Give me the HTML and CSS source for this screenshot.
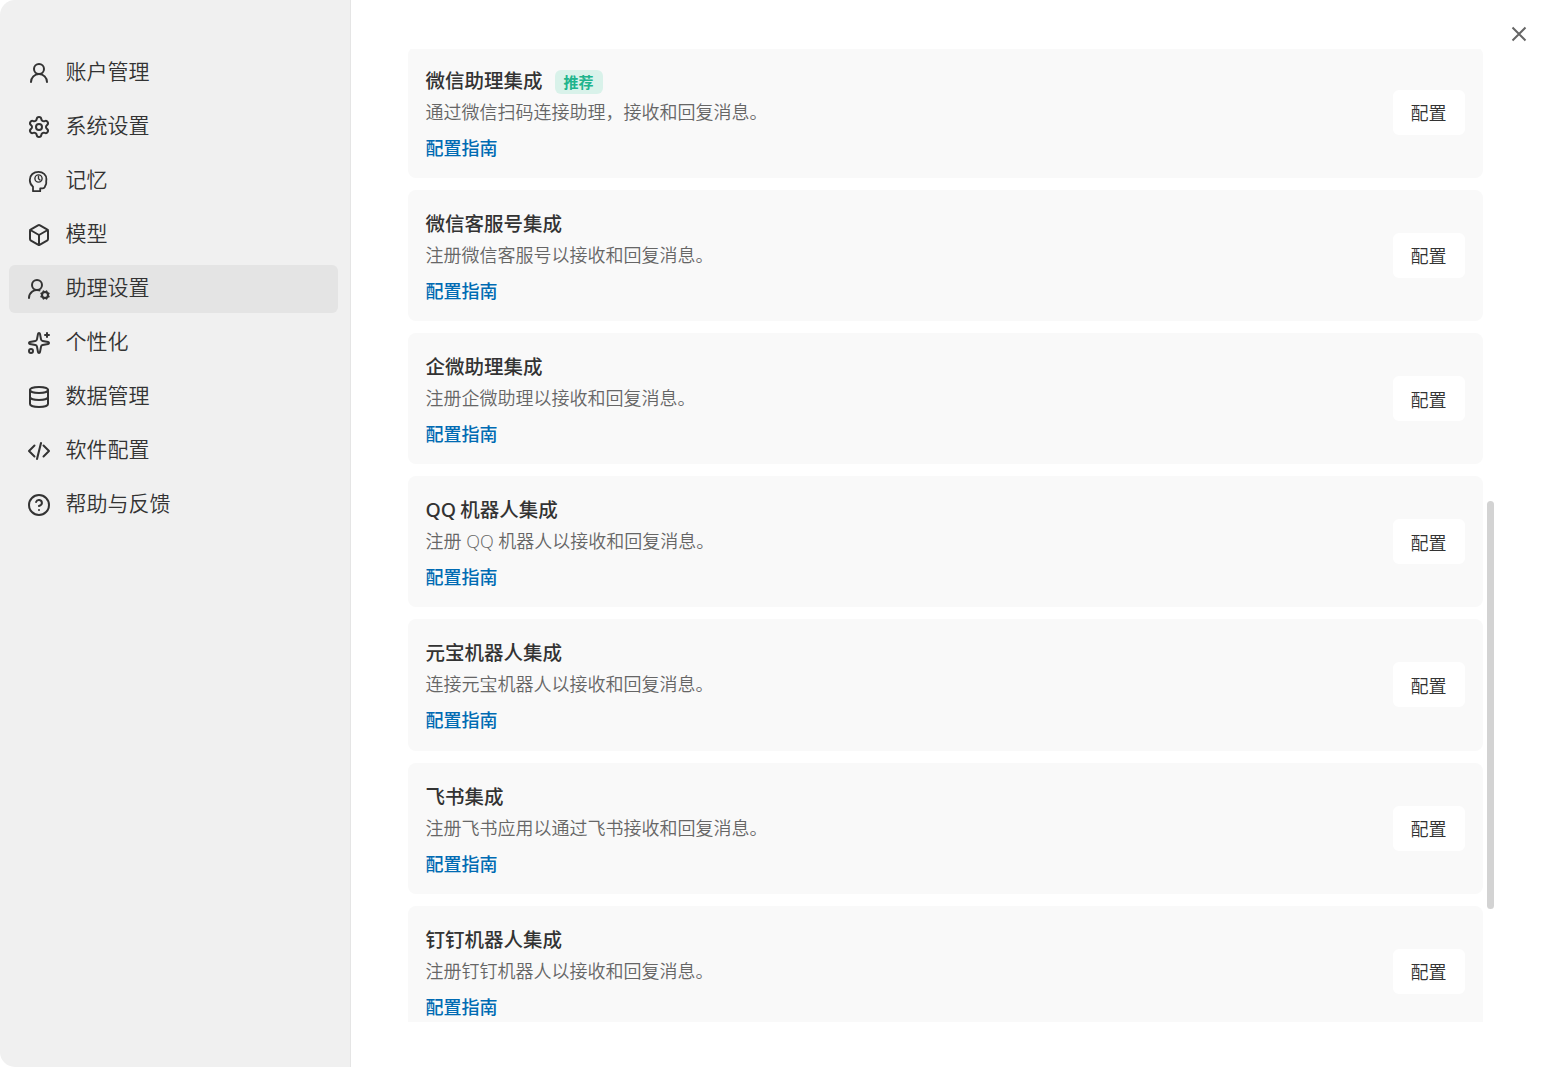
FILE: index.html
```
<!DOCTYPE html>
<html lang="zh-CN">

<head>
<meta charset="utf-8">
<title>助理设置</title>
<link rel="stylesheet" href="styles.css">
</head>

<body>

<div class="window">
    <nav class="sidebar">
        <a class="item">
            <svg class="icon" viewBox="0 0 24 24"><circle cx="12" cy="8" r="5"/><path d="M20 21a8 8 0 0 0-16 0"/></svg>
            <span>账户管理</span>
        </a>
        <a class="item">
            <svg class="icon" viewBox="0 0 24 24"><path d="M9.671 4.136a2.34 2.34 0 0 1 4.659 0 2.34 2.34 0 0 0 3.319 1.915 2.34 2.34 0 0 1 2.33 4.033 2.34 2.34 0 0 0 0 3.831 2.34 2.34 0 0 1-2.33 4.033 2.34 2.34 0 0 0-3.319 1.915 2.34 2.34 0 0 1-4.659 0 2.34 2.34 0 0 0-3.32-1.915 2.34 2.34 0 0 1-2.33-4.033 2.34 2.34 0 0 0 0-3.831A2.34 2.34 0 0 1 6.35 6.051a2.34 2.34 0 0 0 3.319-1.915"/><circle cx="12" cy="12" r="3"/></svg>
            <span>系统设置</span>
        </a>
        <a class="item">
            <svg class="icon thin" viewBox="0 0 24 24"><path d="M6 22.2V17.6C3.9 16 2.8 13.600 2.800 10.900C2.800 6 6.700 2.800 11.500 2.800C16 2.800 19.400 5.900 19.400 10C19.400 11 19.200 11.800 19.200 12.600C19.200 13.600 19.500 14.500 18.900 15.500C18.500 16.300 18.100 17 17.700 18.200C17.400 19.300 16.300 19.400 13.200 19.400V22.200Z"/><circle class="dial" cx="11.500" cy="9.500" r="3.600"/><path class="dial" d="M11.500 7.300V9.700L13 11"/></svg>
            <span>记忆</span>
        </a>
        <a class="item">
            <svg class="icon" viewBox="0 0 24 24"><path d="M21 8a2 2 0 0 0-1-1.730l-7-4a2 2 0 0 0-2 0l-7 4A2 2 0 0 0 3 8v8a2 2 0 0 0 1 1.730l7 4a2 2 0 0 0 2 0l7-4A2 2 0 0 0 21 16Z"/><path d="m3.300 7 8.700 5 8.700-5"/><path d="M12 22V12"/></svg>
            <span>模型</span>
        </a>
        <a class="item active">
            <svg class="icon" viewBox="0 0 24 24"><path d="m14.305 19.530.923-.382"/><path d="m15.228 16.852-.923-.383"/><path d="m16.852 15.228-.383-.923"/><path d="m16.852 20.772-.383.924"/><path d="m19.148 15.228.383-.923"/><path d="m19.530 21.696-.382-.924"/><path d="M2 21a8 8 0 0 1 10.434-7.620"/><path d="m20.772 16.852.924-.383"/><path d="m20.772 19.148.924.383"/><circle cx="10" cy="8" r="5"/><circle cx="18" cy="18" r="3"/></svg>
            <span>助理设置</span>
        </a>
        <a class="item">
            <svg class="icon" viewBox="0 0 24 24"><path d="M11.017 2.814a1 1 0 0 1 1.966 0l1.051 5.558a2 2 0 0 0 1.594 1.594l5.558 1.051a1 1 0 0 1 0 1.966l-5.558 1.051a2 2 0 0 0-1.594 1.594l-1.051 5.558a1 1 0 0 1-1.966 0l-1.051-5.558a2 2 0 0 0-1.594-1.594l-5.558-1.051a1 1 0 0 1 0-1.966l5.558-1.051a2 2 0 0 0 1.594-1.594z"/><path d="M20 2v4"/><path d="M22 4h-4"/><circle cx="4" cy="20" r="2"/></svg>
            <span>个性化</span>
        </a>
        <a class="item">
            <svg class="icon" viewBox="0 0 24 24"><ellipse cx="12" cy="5" rx="9" ry="3"/><path d="M3 5v14a9 3 0 0 0 18 0V5"/><path d="M3 12a9 3 0 0 0 18 0"/></svg>
            <span>数据管理</span>
        </a>
        <a class="item">
            <svg class="icon" viewBox="0 0 24 24"><path d="m16.500 17.500 5.500-5.500-5.500-5.500"/><path d="M7.500 6.500l-5.500 5.500 5.500 5.500"/><path d="m14 4-4 16"/></svg>
            <span>软件配置</span>
        </a>
        <a class="item">
            <svg class="icon" viewBox="0 0 24 24"><circle cx="12" cy="12" r="10"/><path d="M9.090 9a3 3 0 0 1 5.830 1c0 2-3 3-3 3"/><path d="M12 17h.01"/></svg>
            <span>帮助与反馈</span>
        </a>
    </nav>

    <main class="content">
        <div class="scroll">
            <div class="list">
                <section class="card">
                    <div class="info">
                        <h3>微信助理集成<span class="tag">推荐</span></h3>
                        <p>通过微信扫码连接助理，接收和回复消息。</p>
                        <a class="guide">配置指南</a>
                    </div>
                    <button>配置</button>
                </section>
                <section class="card">
                    <div class="info">
                        <h3>微信客服号集成</h3>
                        <p>注册微信客服号以接收和回复消息。</p>
                        <a class="guide">配置指南</a>
                    </div>
                    <button>配置</button>
                </section>
                <section class="card">
                    <div class="info">
                        <h3>企微助理集成</h3>
                        <p>注册企微助理以接收和回复消息。</p>
                        <a class="guide">配置指南</a>
                    </div>
                    <button>配置</button>
                </section>
                <section class="card">
                    <div class="info">
                        <h3>QQ 机器人集成</h3>
                        <p>注册 QQ 机器人以接收和回复消息。</p>
                        <a class="guide">配置指南</a>
                    </div>
                    <button>配置</button>
                </section>
                <section class="card">
                    <div class="info">
                        <h3>元宝机器人集成</h3>
                        <p>连接元宝机器人以接收和回复消息。</p>
                        <a class="guide">配置指南</a>
                    </div>
                    <button>配置</button>
                </section>
                <section class="card">
                    <div class="info">
                        <h3>飞书集成</h3>
                        <p>注册飞书应用以通过飞书接收和回复消息。</p>
                        <a class="guide">配置指南</a>
                    </div>
                    <button>配置</button>
                </section>
                <section class="card">
                    <div class="info">
                        <h3>钉钉机器人集成</h3>
                        <p>注册钉钉机器人以接收和回复消息。</p>
                        <a class="guide">配置指南</a>
                    </div>
                    <button>配置</button>
                </section>
            </div>
            <div class="scrollbar"></div>
        </div>
        <svg class="close" viewBox="0 0 16 16"><path d="M1.500 1.500l13 13M14.500 1.500l-13 13"/></svg>
    </main>
</div>

</body>

</html>
```

FILE: styles.css
```
* {
    box-sizing: border-box;
}
body {
    margin: 0;
    background-color: #fff;
    color: #333;
    font-family: "Open Sans", "Noto Sans CJK SC", sans-serif;
    font-weight: 350;
}
.window {
    display: flex;
    height: 1067px;
    overflow: hidden;
    border-radius: 15px;
}

/* left menu */
.sidebar {
    display: flex;
    flex-direction: column;
    gap: 6px;
    width: 351px;
    padding: 49px 12px 0 9px;
    background-color: #f0f0f0;
    border-right: 1px solid #e5e5e5;
}
.item {
    display: flex;
    align-items: center;
    gap: 14.5px;
    height: 48px;
    padding-left: 18px;
    border-radius: 6px;
    font-size: 21px;
    line-height: 30px;
}
.item span {
    margin-top: -5px;
}
.item.active {
    background-color: #e4e4e4;
}
.icon {
    width: 24px;
    height: 24px;
    fill: none;
    stroke: #333;
    stroke-width: 2;
    stroke-linecap: round;
    stroke-linejoin: round;
}
.icon.thin {
    stroke-width: 1.8;
}
.icon .dial {
    stroke-width: 1.4;
}

/* right side */
.content {
    position: relative;
    flex: 1;
    padding: 49px 55px 45px 57px;
}
.scroll {
    display: flex;
    gap: 4px;
    height: 973px;
    overflow: hidden;
}
.list {
    display: flex;
    flex-direction: column;
    gap: 12px;
    flex: 1;
    margin-top: -2.44px;
}
.card {
    display: flex;
    flex-shrink: 0;
    align-items: center;
    justify-content: space-between;
    height: 131.2px;
    padding: 0 18px 0 17.5px;
    border-radius: 8px;
    background-color: #f9f9f9;
}
.info {
    padding-top: 3px;
}
h3 {
    display: flex;
    align-items: center;
    gap: 12px;
    margin: 0;
    font-family: "Noto Sans", "Noto Sans CJK SC", sans-serif;
    font-size: 19.5px;
    font-weight: 500;
    line-height: 30px;
    word-spacing: -1px;
}
.tag {
    height: 24px;
    padding: 0 9px;
    margin-top: 2px;
    border-radius: 6px;
    background-color: #d9f2ea;
    color: #20b48c;
    font-size: 15px;
    font-weight: 700;
    line-height: 24px;
}
p {
    margin: 2px 0 8px;
    color: #666;
    font-size: 18px;
    line-height: 28px;
}
.guide {
    display: block;
    color: #006bb3;
    font-size: 18px;
    font-weight: 500;
    line-height: 28px;
}
button {
    width: 72px;
    height: 45px;
    padding: 0 1px 0 0;
    border: none;
    border-radius: 6px;
    background-color: #fff;
    color: #333;
    font-family: inherit;
    font-size: 18px;
    font-weight: inherit;
}
.scrollbar {
    width: 7px;
    height: 408px;
    margin-top: 452px;
    border-radius: 4px;
    background-color: #d3d3d3;
}
.close {
    position: absolute;
    top: 26px;
    right: 22px;
    width: 16px;
    height: 16px;
    fill: none;
    stroke: #666;
    stroke-width: 2;
}
```
